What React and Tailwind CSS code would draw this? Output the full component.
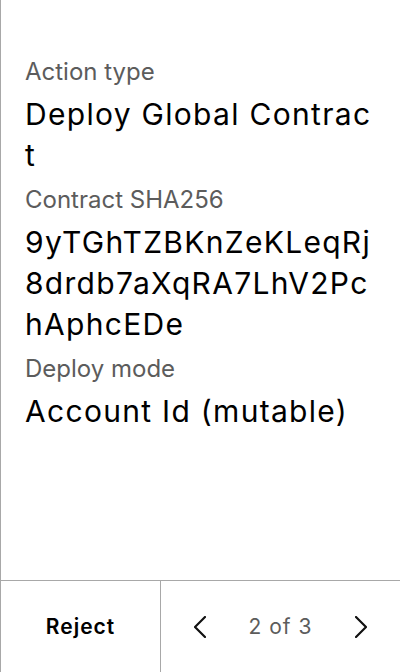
function Chevron({ dir }) {
  const d = dir === "left" ? "M11 1 1 11l10 10" : "M1 1l10 10L1 21";
  return (
    <svg width="12" height="22" viewBox="0 0 12 22" fill="none" stroke="#111" strokeWidth="2.2" strokeLinecap="round" strokeLinejoin="round">
      <path d={d} />
    </svg>
  );
}

function Field({ label, value }) {
  return (
    <div className="flex flex-col gap-2">
      <div className="text-[24px] leading-[28px] text-[#5c5c5c]">{label}</div>
      <div className="text-[30px] leading-[41px] tracking-[1.3px] text-black break-all">{value}</div>
    </div>
  );
}

export default function App() {
  return (
    <div
      className="h-[672px] w-[400px] flex flex-col bg-white border-l border-[#a8a8a8]"
      style={{ fontFamily: "Inter, 'Noto Sans', sans-serif" }}
    >
      <div className="flex-1 flex flex-col gap-[10px] pt-[58px] pl-6 pr-[22px]">
        <Field label="Action type" value="Deploy Global Contract" />
        <Field label="Contract SHA256" value="9yTGhTZBKnZeKLeqRj8drdb7aXqRA7LhV2PchAphcEDe" />
        <Field label="Deploy mode" value="Account Id (mutable)" />
      </div>
      <div className="h-[92px] flex border-t border-[#a8a8a8]">
        <button className="w-[160px] flex items-center justify-center text-[21px] tracking-[1px] font-semibold text-black border-r border-[#a8a8a8]">
          Reject
        </button>
        <div className="flex-1 flex items-center justify-between pl-[33px] pr-[33px]">
          <button className="flex items-center justify-center">
            <Chevron dir="left" />
          </button>
          <span className="text-[21px] tracking-[1px] text-[#5c5c5c]">2 of 3</span>
          <button className="flex items-center justify-center">
            <Chevron dir="right" />
          </button>
        </div>
      </div>
    </div>
  );
}
